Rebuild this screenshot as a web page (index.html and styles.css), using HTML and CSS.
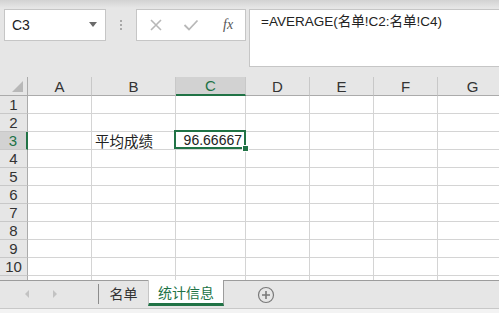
FILE: index.html
```html
<!DOCTYPE html>
<html lang="zh-CN">
<head>
    <meta charset="UTF-8">
    <title>统计信息</title>
    <link rel="stylesheet" href="styles.css">
</head>
<body>
    <div class="toolbar">
        <div class="name-box">
            <span>C3</span>
            <span class="drop"></span>
        </div>
        <div class="grip"><i></i><i></i><i></i></div>
        <div class="buttons">
            <svg class="btn" width="14" height="14" viewBox="0 0 14 14"><path d="M2 2L12 12M12 2L2 12" stroke="#b8b8b8" stroke-width="1.6" fill="none"/></svg>
            <svg class="btn" width="16" height="14" viewBox="0 0 16 14"><path d="M1.5 7L6 11.5L14.5 2.5" stroke="#b8b8b8" stroke-width="1.8" fill="none"/></svg>
            <span class="fx">fx</span>
        </div>
        <div class="formula">=AVERAGE(名单!C2:名单!C4)</div>
    </div>

    <div class="sheet">
        <div class="grid">
            <div class="hd corner"><span class="tri"></span></div>
            <div class="hd">A</div>
            <div class="hd">B</div>
            <div class="hd sel-col">C</div>
            <div class="hd">D</div>
            <div class="hd">E</div>
            <div class="hd">F</div>
            <div class="hd">G</div>

            <div class="rh">1</div><div class="c"></div><div class="c"></div><div class="c"></div><div class="c"></div><div class="c"></div><div class="c"></div><div class="c"></div>
            <div class="rh">2</div><div class="c"></div><div class="c"></div><div class="c"></div><div class="c"></div><div class="c"></div><div class="c"></div><div class="c"></div>
            <div class="rh sel-row">3</div><div class="c"></div><div class="c text">平均成绩</div><div class="c num active">96.66667<span class="handle"></span></div><div class="c"></div><div class="c"></div><div class="c"></div><div class="c"></div>
            <div class="rh">4</div><div class="c"></div><div class="c"></div><div class="c"></div><div class="c"></div><div class="c"></div><div class="c"></div><div class="c"></div>
            <div class="rh">5</div><div class="c"></div><div class="c"></div><div class="c"></div><div class="c"></div><div class="c"></div><div class="c"></div><div class="c"></div>
            <div class="rh">6</div><div class="c"></div><div class="c"></div><div class="c"></div><div class="c"></div><div class="c"></div><div class="c"></div><div class="c"></div>
            <div class="rh">7</div><div class="c"></div><div class="c"></div><div class="c"></div><div class="c"></div><div class="c"></div><div class="c"></div><div class="c"></div>
            <div class="rh">8</div><div class="c"></div><div class="c"></div><div class="c"></div><div class="c"></div><div class="c"></div><div class="c"></div><div class="c"></div>
            <div class="rh">9</div><div class="c"></div><div class="c"></div><div class="c"></div><div class="c"></div><div class="c"></div><div class="c"></div><div class="c"></div>
            <div class="rh">10</div><div class="c"></div><div class="c"></div><div class="c"></div><div class="c"></div><div class="c"></div><div class="c"></div><div class="c"></div>
            <div class="rh"></div><div class="c"></div><div class="c"></div><div class="c"></div><div class="c"></div><div class="c"></div><div class="c"></div><div class="c"></div>
        </div>
    </div>

    <div class="tabbar">
        <div class="nav">
            <span class="arrow left"></span>
            <span class="arrow right"></span>
        </div>
        <div class="tab">名单</div>
        <div class="tab current">统计信息</div>
        <svg class="add" width="18" height="18" viewBox="0 0 18 18">
            <circle cx="9" cy="9" r="7.5" stroke="#7a7a7a" stroke-width="1.2" fill="none"/>
            <path d="M9 5V13M5 9H13" stroke="#7a7a7a" stroke-width="1.6"/>
        </svg>
    </div>
    <div class="status"></div>
</body>
</html>
```

FILE: styles.css
```css
body {
    margin: 0;
    width: 499px;
    height: 313px;
    overflow: hidden;
    background-color: #e6e6e6;
    font-family: "Liberation Sans", "Noto Sans CJK SC", sans-serif;
    color: #222;
}

.toolbar {
    height: 77px;
    box-sizing: border-box;
    padding-top: 9px;
    display: flex;
    align-items: flex-start;
    background: linear-gradient(#d2d2d2, #e6e6e6 8px);
}

.name-box {
    margin-left: 4px;
    width: 102px;
    height: 32px;
    box-sizing: border-box;
    border: 1px solid #c6c6c6;
    background-color: #fff;
    display: flex;
    align-items: center;
    justify-content: space-between;
    padding: 0 8px 0 7px;
    font-size: 14px;
}

.drop {
    width: 0;
    height: 0;
    border-left: 4px solid transparent;
    border-right: 4px solid transparent;
    border-top: 5px solid #6a6a6a;
    margin-top: -2px;
}

.grip {
    width: 30px;
    height: 32px;
    display: flex;
    flex-direction: column;
    align-items: center;
    justify-content: center;
    gap: 2px;
}

.grip i {
    width: 2px;
    height: 2px;
    background-color: #a8a8a8;
}

.buttons {
    width: 110px;
    height: 32px;
    box-sizing: border-box;
    border: 1px solid #c6c6c6;
    background-color: #fff;
    display: flex;
    align-items: center;
    padding-left: 12px;
    gap: 20px;
}

.fx {
    font-family: "Liberation Serif", serif;
    font-style: italic;
    font-size: 14px;
    color: #555;
    margin-left: 4px;
}

.formula {
    margin-left: 3px;
    flex: 1;
    height: 58px;
    box-sizing: border-box;
    border: 1px solid #c6c6c6;
    border-right: none;
    background-color: #fff;
    padding: 3px 0 0 11px;
    font-size: 13.5px;
    line-height: 18px;
    color: #222;
}

.sheet {
    height: 203px;
    overflow: hidden;
    background-color: #fff;
}

.grid {
    display: grid;
    grid-template-columns: 28px 64px 84px 70px 64px 64px 64px 70px;
    grid-template-rows: 19px;
    grid-auto-rows: 18px;
}

.hd {
    height: 19px;
    box-sizing: border-box;
    background-color: #e6e6e6;
    border-right: 1px solid #c8c8c8;
    border-bottom: 1px solid #ababab;
    text-align: center;
    font-size: 15px;
    line-height: 19px;
    color: #333;
}

.corner {
    position: relative;
    border-right-color: #ababab;
}

.tri {
    position: absolute;
    right: 4px;
    bottom: 3px;
    width: 0;
    height: 0;
    border-left: 11px solid transparent;
    border-bottom: 11px solid #b8b8b8;
}

.sel-col {
    background-color: #d2d2d2;
    color: #217346;
    border-bottom: 2px solid #217346;
    line-height: 18px;
}

.rh {
    box-sizing: border-box;
    background-color: #e6e6e6;
    border-right: 1px solid #ababab;
    border-bottom: 1px solid #c8c8c8;
    text-align: center;
    font-size: 15px;
    line-height: 18px;
    color: #333;
}

.sel-row {
    background-color: #d2d2d2;
    color: #217346;
    border-right: 2px solid #217346;
}

.c {
    box-sizing: border-box;
    border-right: 1px solid #d4d4d4;
    border-bottom: 1px solid #d4d4d4;
    font-size: 14px;
    line-height: 17px;
    white-space: nowrap;
}

.text {
    padding-left: 3px;
    font-family: "Noto Sans CJK SC", sans-serif;
    font-size: 14.5px;
}

.num {
    text-align: right;
    padding-right: 3px;
}

.active {
    position: relative;
}

.active::after {
    content: "";
    position: absolute;
    left: -2px;
    top: -2px;
    right: -1px;
    bottom: 0;
    border: 2px solid #217346;
}

.handle {
    position: absolute;
    right: -4px;
    bottom: -3px;
    width: 5px;
    height: 5px;
    background-color: #217346;
    border: 1px solid #fff;
    z-index: 2;
}

.tabbar {
    height: 28px;
    box-sizing: border-box;
    border-top: 1px solid #9c9c9c;
    display: flex;
    align-items: flex-start;
}

.nav {
    width: 99px;
    height: 20px;
    display: flex;
    align-items: center;
    padding-left: 25px;
    box-sizing: border-box;
    gap: 24px;
    margin-top: 3px;
    border-right: 1px solid #8c8c8c;
}

.arrow {
    width: 0;
    height: 0;
    border-top: 4px solid transparent;
    border-bottom: 4px solid transparent;
}

.arrow.left {
    border-right: 4px solid #c2c2c2;
}

.arrow.right {
    border-left: 4px solid #c2c2c2;
}

.tab {
    width: 49px;
    height: 24px;
    text-align: center;
    font-family: "Noto Sans CJK SC", sans-serif;
    font-size: 14px;
    line-height: 24px;
    color: #333;
}

.tab.current {
    width: 76px;
    box-sizing: border-box;
    background-color: #fff;
    color: #217346;
    border-left: 1px solid #c6c6c6;
    border-right: 1px solid #9c9c9c;
    border-bottom: 3px solid #217346;
    margin-top: -1px;
    height: 26px;
    line-height: 24px;
}

.add {
    margin: 5px 0 0 33px;
}

.status {
    height: 5px;
    border-top: 1px solid #c8c8c8;
    background-color: #f3f3f3;
}
```
